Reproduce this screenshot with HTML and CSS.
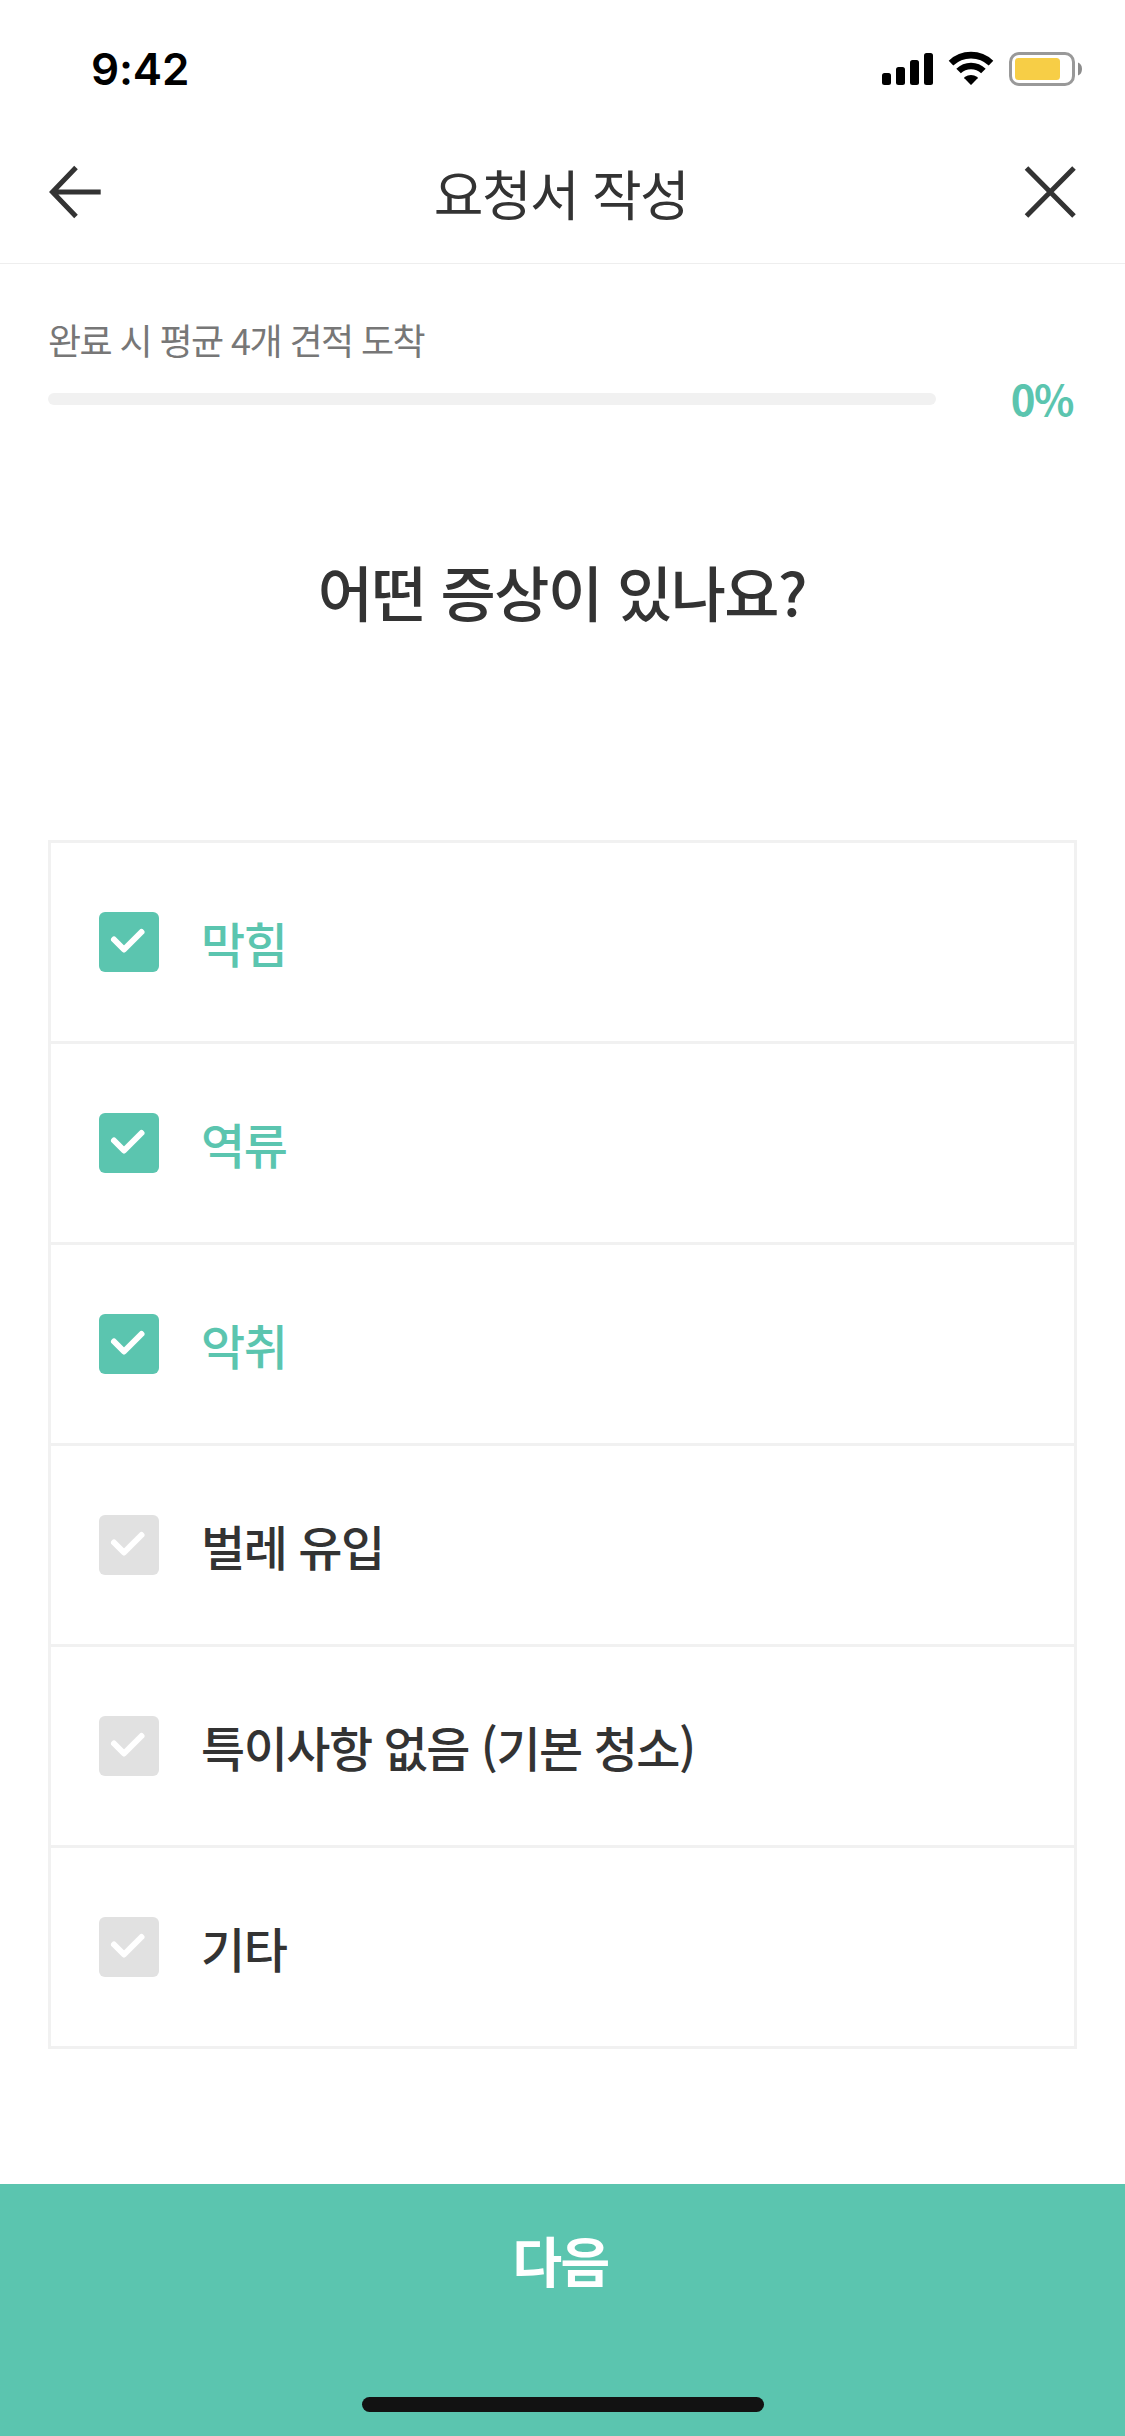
FILE: index.html
```html
<!DOCTYPE html>
<html lang="ko">
<head>
<meta charset="utf-8">
<title>요청서 작성</title>
<link rel="stylesheet" href="styles.css">
</head>
<body>
<div class="screen">
  <div class="status">
    <span class="time">9:42</span>
    <svg class="status-icons" width="202" height="36" viewBox="0 0 202 36">
      <rect x="0" y="22" width="9" height="12" rx="2.5"/>
      <rect x="14" y="16" width="9" height="18" rx="2.5"/>
      <rect x="28" y="9" width="9" height="25" rx="2.5"/>
      <rect x="42" y="2" width="9" height="32" rx="2.5"/>
      <path d="M69 12.100A29 29 0 0 1 109 12.100" fill="none" stroke="#000" stroke-width="6.6"/>
      <path d="M76.6 20.100A17.5 17.5 0 0 1 101.4 20.100" fill="none" stroke="#000" stroke-width="6.4"/>
      <path d="M82.4 27.2Q82 26.6 82.6 26.1Q89 21.8 95.4 26.1Q96 26.6 95.6 27.2L89.6 33.4Q89 34 88.4 33.4Z"/>
      <rect x="128.500" y="2.500" width="63" height="31" rx="8.500" fill="none" stroke="#999" stroke-width="3"/>
      <rect x="133" y="7" width="45" height="22" rx="3.500" fill="#f7ce46"/>
      <path d="M196 11.500Q200 13 200 18T196 24.500Z" fill="#8c8c8c"/>
    </svg>
  </div>
  <header class="header">
    <svg width="54" height="54" viewBox="0 0 54 54"><path d="M29 2.500L5.500 27L29 51.500M6 27H53.700" fill="none" stroke="#333" stroke-width="5"/></svg>
    <h1 class="title">요청서 작성</h1>
    <svg width="54" height="54" viewBox="0 0 54 54"><path d="M3.500 3L51 51M51 3L3.500 51" fill="none" stroke="#333" stroke-width="5"/></svg>
  </header>
  <main class="main">
    <p class="hint">완료 시 평균 4개 견적 도착</p>
    <div class="progress">
      <div class="track"></div>
      <span class="percent">0%</span>
    </div>
    <h2 class="question">어떤 증상이 있나요?</h2>
    <ul class="options">
      <li class="option checked"><span class="box"><svg viewBox="0 0 60 60"><path d="M15 27.500L25 37.500L42.500 20"/></svg></span><span class="label">막힘</span></li>
      <li class="option checked"><span class="box"><svg viewBox="0 0 60 60"><path d="M15 27.500L25 37.500L42.500 20"/></svg></span><span class="label">역류</span></li>
      <li class="option checked"><span class="box"><svg viewBox="0 0 60 60"><path d="M15 27.500L25 37.500L42.500 20"/></svg></span><span class="label">악취</span></li>
      <li class="option"><span class="box"><svg viewBox="0 0 60 60"><path d="M15 27.500L25 37.500L42.500 20"/></svg></span><span class="label">벌레 유입</span></li>
      <li class="option"><span class="box"><svg viewBox="0 0 60 60"><path d="M15 27.500L25 37.500L42.500 20"/></svg></span><span class="label">특이사항 없음 (기본 청소)</span></li>
      <li class="option"><span class="box"><svg viewBox="0 0 60 60"><path d="M15 27.500L25 37.500L42.500 20"/></svg></span><span class="label">기타</span></li>
    </ul>
  </main>
  <footer class="next">
    <span class="next-label">다음</span>
    <span class="home"></span>
  </footer>
</div>
</body>
</html>
```
FILE: styles.css
```css
* { box-sizing: border-box; }
body { margin: 0; background: #fff; }
h1, h2, p, ul { margin: 0; padding: 0; }
.screen {
  width: 1125px;
  height: 2436px;
  display: flex;
  flex-direction: column;
  overflow: hidden;
  background: #fff;
  color: #333;
  font-family: "Noto Sans CJK KR", sans-serif;
}
.status {
  height: 132px;
  padding: 51px 41px 0 91px;
  display: flex;
  justify-content: space-between;
  align-items: flex-start;
}
.time {
  font: 600 44px/36px Inter, sans-serif;
  letter-spacing: -0.2px;
  color: #000;
}
.status-icons { display: block; }
.header {
  height: 132px;
  padding: 0 48px 12px 47px;
  display: flex;
  justify-content: space-between;
  align-items: center;
  border-bottom: 1px solid #eee;
}
.header svg { display: block; }
.title { padding: 2px 2px 0 0; font-size: 54px; line-height: 60px; font-weight: 400; letter-spacing: -1.5px; }
.main { flex: 1; padding: 48px 48px 0; }
.hint { font-size: 36px; line-height: 54px; color: #777; letter-spacing: -1.6px; }
.progress { margin-top: 3px; display: flex; justify-content: space-between; align-items: center; height: 60px; }
.track { width: 888px; height: 12px; border-radius: 6px; background: #f1f1f1; }
.percent { padding: 0 4px 2px 0; font-size: 42px; line-height: 58px; font-weight: 700; color: #5bc5af; letter-spacing: -1.5px; }
.question {
  margin-top: 117px;
  padding-right: 1px;
  font-size: 60px;
  line-height: 90px;
  font-weight: 500;
  text-align: center;
  letter-spacing: -1.5px;
}
.options { margin-top: 204px; list-style: none; border: 3px solid #f1f1f1; }
.option { height: 201px; padding: 0 48px; display: flex; align-items: center; gap: 42px; border-bottom: 3px solid #f1f1f1; }
.option:last-child { height: 198px; border-bottom: 0; }
.box { width: 60px; height: 60px; border-radius: 6px; background: #e1e1e1; }
.box svg { display: block; width: 60px; height: 60px; fill: none; stroke: #fff; stroke-width: 6px; stroke-linecap: round; stroke-linejoin: round; }
.label { font-size: 48px; line-height: 72px; font-weight: 500; letter-spacing: -1.5px; }
.checked .box { background: #5bc5af; }
.checked .label { color: #5bc5af; }
.next {
  height: 252px;
  padding: 40px 0 24px;
  display: flex;
  flex-direction: column;
  justify-content: space-between;
  align-items: center;
  background: #5bc5af;
}
.next-label { padding-right: 4px; font-size: 54px; line-height: 72px; font-weight: 700; color: #fff; letter-spacing: -1.8px; }
.home { width: 402px; height: 15px; border-radius: 8px; background: #121212; }
```
